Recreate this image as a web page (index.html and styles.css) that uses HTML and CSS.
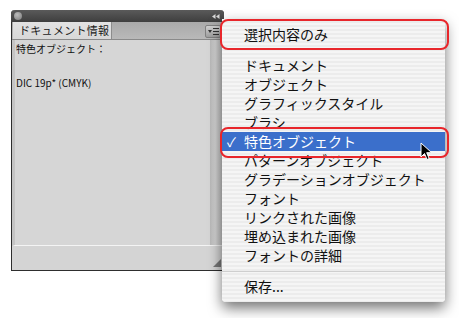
FILE: index.html
```html
<!DOCTYPE html>
<html lang="ja">
<head>
  <meta charset="UTF-8" />
  <title>ドキュメント情報</title>
  <link rel="stylesheet" href="styles.css">
</head>
<body>
  <div class="stage">
    <div class="panel">
      <div class="titlebar">
        <span class="close-dot"></span>
        <svg class="collapse" width="8" height="5" viewBox="0 0 8 5">
          <path d="M0 2.5L3.5 0v5z M4 2.5L7.5 0v5z" fill="#d8d8d8"/>
        </svg>
      </div>
      <div class="tabrow">
        <div class="tab">ドキュメント情報</div>
        <div class="menu-btn">
          <svg width="13" height="10" viewBox="0 0 13 10">
            <path d="M1 3h4l-2 3z" fill="#333"/>
            <rect x="6" y="1" width="6" height="1" fill="#333"/>
            <rect x="6" y="4" width="6" height="1" fill="#333"/>
            <rect x="6" y="7" width="6" height="1" fill="#333"/>
          </svg>
        </div>
      </div>
      <div class="body">
        <div class="info">
          <div>特色オブジェクト：</div>
          <div class="gap"></div>
          <div>DIC 19p* (CMYK)</div>
        </div>
        <div class="scroll"></div>
      </div>
      <div class="footer">
        <span class="grip"></span>
      </div>
    </div>

    <ul class="popup">
      <li>選択内容のみ</li>
      <li class="sep"></li>
      <li>ドキュメント</li>
      <li>オブジェクト</li>
      <li>グラフィックスタイル</li>
      <li>ブラシ</li>
      <li class="active"><span class="check">✓</span>特色オブジェクト</li>
      <li>パターンオブジェクト</li>
      <li>グラデーションオブジェクト</li>
      <li>フォント</li>
      <li>リンクされた画像</li>
      <li>埋め込まれた画像</li>
      <li>フォントの詳細</li>
      <li class="sep line"></li>
      <li>保存...</li>
    </ul>

    <div class="mark mark-top"></div>
    <div class="mark mark-mid"></div>

    <svg class="cursor" width="13" height="19" viewBox="0 0 13 19">
      <path d="M1 1v14l3.5-3.5 2.5 6 2.2-1-2.5-5.8h5z" fill="#000" stroke="#fff" stroke-width="1"/>
    </svg>
  </div>
</body>
</html>
```

FILE: styles.css
```css
html, body {
  margin: 0;
  padding: 0;
}
body {
  background-color: #fff;
  font-family: "Noto Sans CJK JP", "Noto Sans", sans-serif;
  color: #111;
}
.stage {
  position: relative;
  width: 459px;
  height: 318px;
  overflow: hidden;
  padding: 10px 0 0 11px;
  box-sizing: border-box;
}
.panel {
  width: 213px;
  display: flex;
  flex-direction: column;
  border: 1px solid #2e2e2e;
  border-top: none;
  border-radius: 4px 4px 0 0;
  box-sizing: border-box;
}
.titlebar {
  height: 12px;
  margin: 0 -1px;
  background: linear-gradient(#5a5a5a, #3e3e3e);
  border-radius: 4px 4px 0 0;
  display: flex;
  align-items: center;
  justify-content: space-between;
  padding: 0 4px 0 3px;
}
.close-dot {
  width: 8px;
  height: 8px;
  border-radius: 50%;
  background: radial-gradient(circle at 40% 35%, #bcbcbc, #7a7a7a);
}
.tabrow {
  height: 18px;
  display: flex;
  align-items: stretch;
  background: linear-gradient(#a9a9a9, #b9b9b9);
  border-bottom: 1px solid #8a8a8a;
  box-sizing: border-box;
}
.tab {
  width: 99px;
  margin-left: 1px;
  background: linear-gradient(#e2e2e2, #d8d8d8);
  border-right: 1px solid #8c8c8c;
  font-size: 11px;
  line-height: 17px;
  letter-spacing: 0.3px;
  padding-left: 6px;
  box-sizing: border-box;
  white-space: nowrap;
  overflow: hidden;
  color: #1a1a1a;
}
.menu-btn {
  margin: 3px 2px 0 auto;
  width: 14px;
  height: 11px;
  background: linear-gradient(#cfcfcf, #9e9e9e);
  border: 1px solid #808080;
  border-radius: 2px;
  display: flex;
  align-items: center;
  justify-content: center;
}
.body {
  height: 205px;
  display: flex;
  background-color: #d6d6d6;
  border-left: 3px solid #c4c4c4;
  border-bottom: 1px solid #f4f4f4;
}
.info {
  flex: 1;
  font-size: 10px;
  line-height: 14px;
  padding: 2px 0 0 1px;
  color: #111;
}
.info .gap {
  height: 20px;
}
.scroll {
  width: 13px;
  background: linear-gradient(90deg, #b8b8b8, #d2d2d2 40%, #c6c6c6);
}
.footer {
  height: 21px;
  background-color: #d4d4d4;
  display: flex;
  justify-content: flex-end;
  align-items: flex-end;
  padding: 0 2px 3px 0;
}
.grip {
  width: 8px;
  height: 8px;
  background: radial-gradient(circle, #777 0.8px, transparent 1px) 0 0 / 2px 2px;
  clip-path: polygon(100% 0, 100% 100%, 0 100%);
}
.popup {
  position: absolute;
  left: 222px;
  top: 19px;
  width: 223px;
  margin: 0;
  padding: 6px 0;
  list-style: none;
  background: repeating-linear-gradient(#f5f5f5 0 2px, #ececec 2px 4px);
  box-shadow: 0 6px 14px rgba(0, 0, 0, 0.55);
  border-radius: 0 0 4px 4px;
  font-size: 14px;
}
.popup li {
  position: relative;
  height: 19px;
  line-height: 19px;
  padding-left: 22px;
  color: #111;
  white-space: nowrap;
}
.popup li.sep {
  height: 12px;
}
.popup li.line::after {
  content: "";
  position: absolute;
  left: 0;
  right: 0;
  top: 6px;
  height: 1px;
  background-color: #cfcfcf;
}
.popup li.active {
  background-color: #3b6fcb;
  color: #fff;
}
.check {
  position: absolute;
  left: 5px;
  font-size: 13px;
}
.mark {
  position: absolute;
  left: 220px;
  width: 229px;
  height: 31px;
  border: 2px solid #e8262b;
  border-radius: 8px;
  box-sizing: border-box;
}
.mark-top {
  top: 19px;
}
.mark-mid {
  top: 127px;
}
.cursor {
  position: absolute;
  left: 420px;
  top: 142px;
}
```
